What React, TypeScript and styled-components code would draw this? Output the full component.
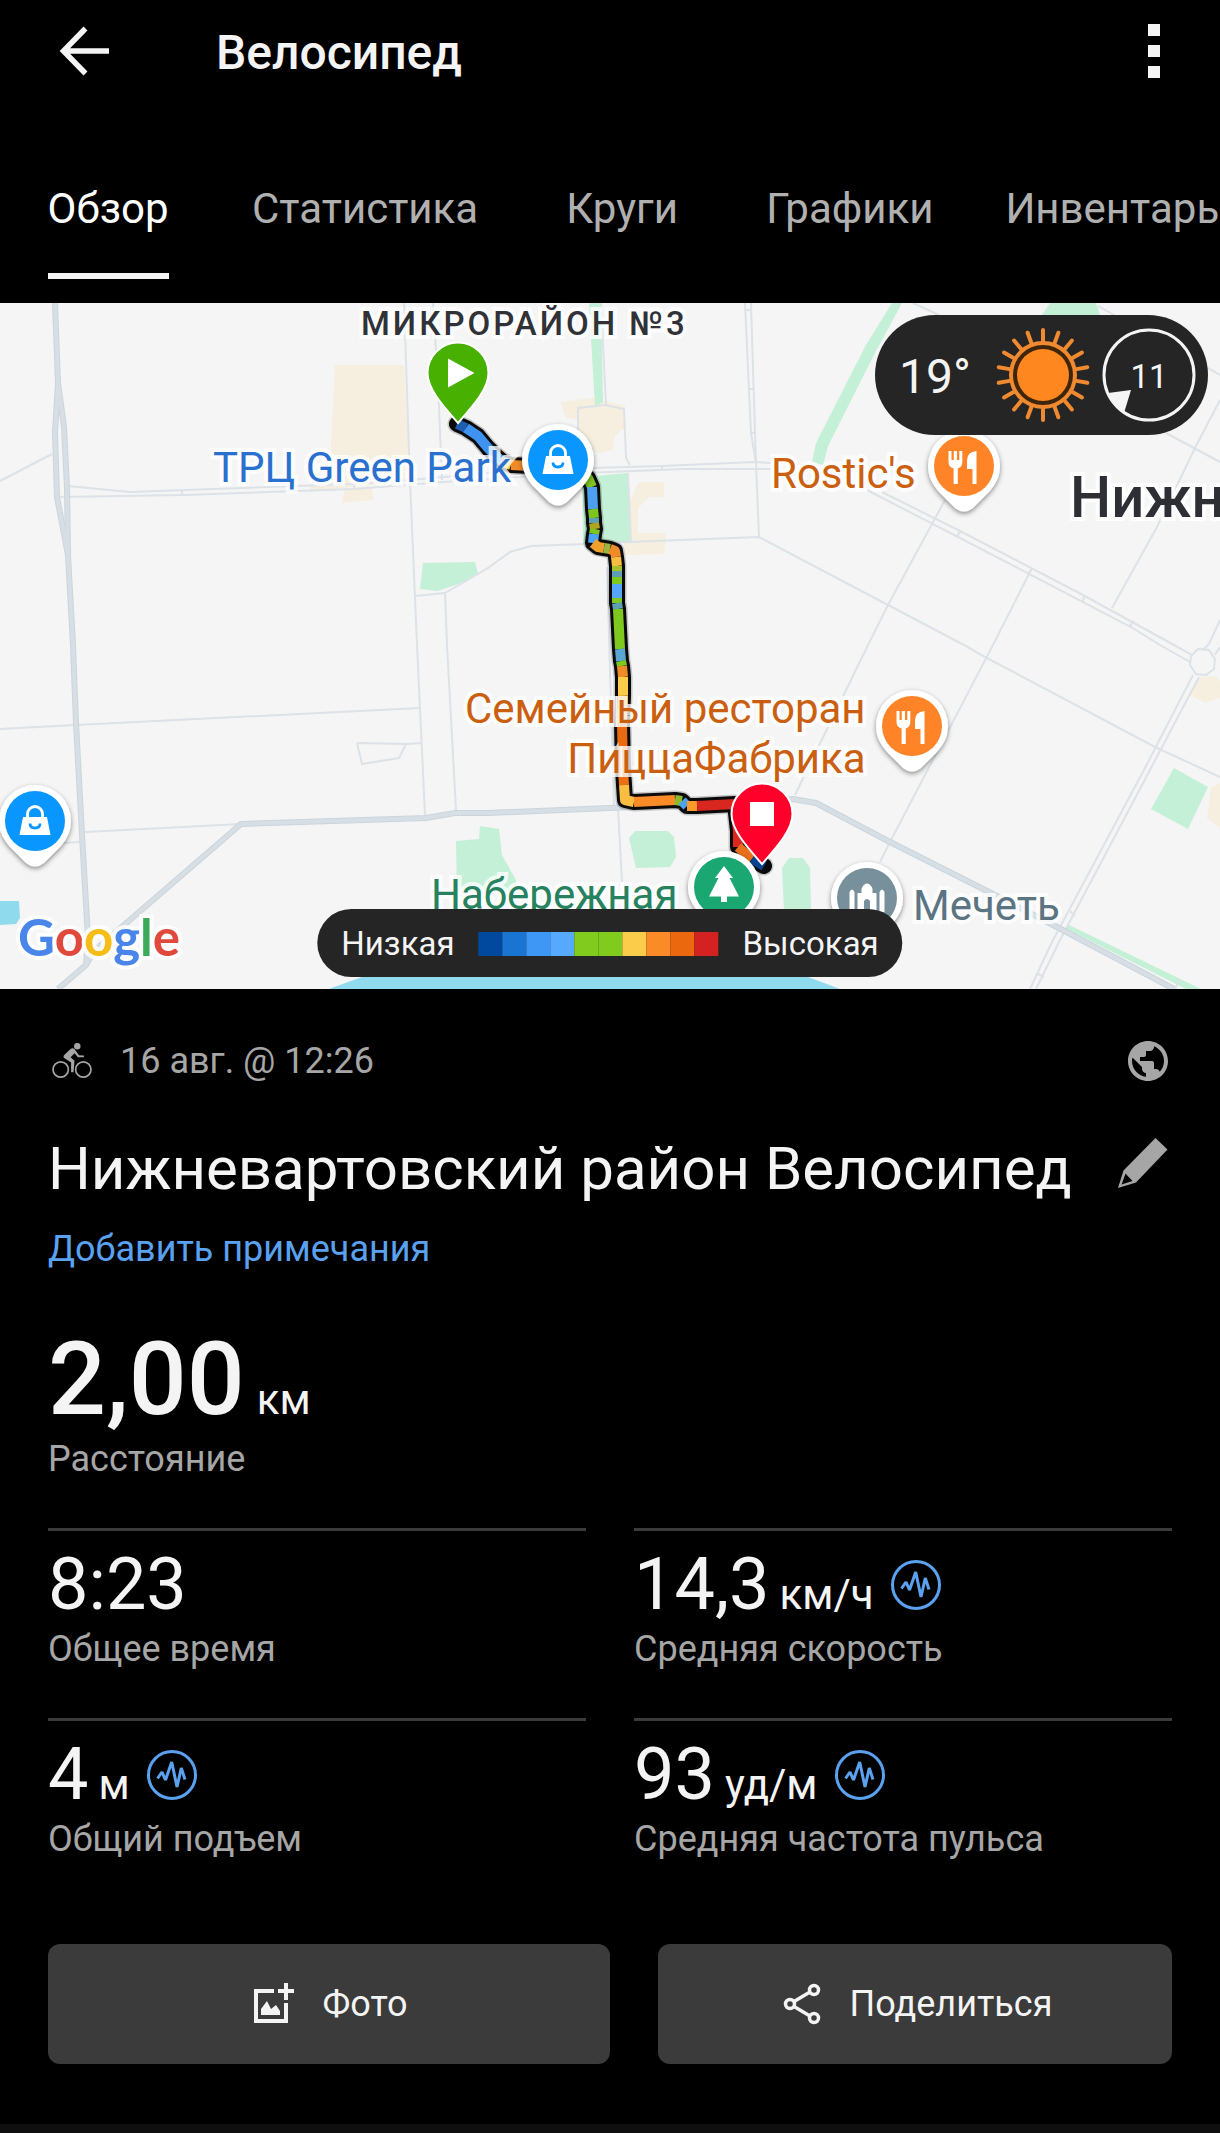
import React from 'react';
import styled, { createGlobalStyle } from 'styled-components';
import { MdPublic } from 'react-icons/md';

const MAP_W = 1220;
const MAP_H = 686;

const color = {
  bg: '#000000',
  text: '#f4f4f4',
  muted: '#a6a6a6',
  link: '#5aa2f0',
  line: '#3b3b3b',
  panel: '#252525',
};

const GlobalStyle = createGlobalStyle`
  *, *::before, *::after { box-sizing: border-box; }
  html, body { margin: 0; background: ${color.bg}; }
  body { font-family: Roboto, "Noto Sans", sans-serif; color: ${color.text}; }
  h1, h2, p, dl, dt, dd { margin: 0; font-weight: 400; }
  button { font: inherit; color: inherit; background: none; border: 0; padding: 0; cursor: pointer; }
  svg { display: block; }
`;

const Page = styled.div`
  overflow-x: hidden;
`;

/* ---------- header ---------- */

const AppBar = styled.header`
  display: flex;
  align-items: center;
  height: 104px;
  padding: 0 42px 0 48px;
`;

const IconButton = styled.button`
  display: flex;
  flex: none;
  align-items: center;
  justify-content: center;
`;

const ScreenTitle = styled.h1`
  flex: 1;
  margin-left: 96px;
  padding-top: 2px;
  font-size: 48px;
  font-weight: 500;
  line-height: 60px;
`;

const TabStrip = styled.nav`
  display: flex;
  overflow: hidden;
`;

const Tab = styled.button<{ $active?: boolean }>`
  display: flex;
  flex: none;
  justify-content: center;
  min-width: 216px;
  padding: 75px 36px 24px;
  font-size: 42px;
  line-height: 60px;
  white-space: nowrap;
  color: ${(p) => (p.$active ? '#ffffff' : '#b0b0b0')};
`;

const TabText = styled.span<{ $active?: boolean }>`
  padding-bottom: 34px;
  border-bottom: 6px solid ${(p) => (p.$active ? color.text : 'transparent')};
`;

/* ---------- map ---------- */

const MapArea = styled.section`
  position: relative;
  overflow: hidden;
  background: #f5f5f5;
`;

const MapDrawing = styled.svg`
  width: 100%;
  height: auto;
`;

const pct = (v: number, total: number) => `${(v / total) * 100}%`;

const MapLabel = styled.span<{ $x: number; $y: number; $color: string }>`
  position: absolute;
  left: ${(p) => pct(p.$x, MAP_W)};
  top: ${(p) => pct(p.$y, MAP_H)};
  font-size: 42px;
  line-height: 50px;
  white-space: pre;
  text-align: right;
  color: ${(p) => p.$color};
  -webkit-text-stroke: 8px rgba(255, 255, 255, 0.8);
  paint-order: stroke fill;
`;

const DistrictLabel = styled(MapLabel)`
  font-size: 33px;
  font-weight: 500;
  letter-spacing: 3px;
`;

const CityLabel = styled(MapLabel)`
  font-size: 58px;
  font-weight: 500;
  line-height: 60px;
`;

const GoogleMark = styled(MapLabel)`
  font-family: Lato, Roboto, sans-serif;
  font-size: 51px;
  font-weight: 700;
  line-height: 60px;
`;

const Tint = styled.span<{ $c: string }>`
  color: ${(p) => p.$c};
`;

const WeatherPill = styled.div`
  position: absolute;
  top: 12px;
  right: 12px;
  display: flex;
  align-items: center;
  height: 120px;
  padding: 0 12px 0 24px;
  border-radius: 60px;
  background: ${color.panel};
`;

const Temperature = styled.span`
  margin-right: 25px;
  padding-top: 4px;
  font-size: 48px;
  line-height: 60px;
`;

const Wind = styled.div`
  display: grid;
  place-items: center;
  margin-left: 12px;
  font-size: 33px;
  line-height: 40px;

  > * {
    grid-area: 1 / 1;
  }
`;

const WindSpeed = styled.span`
  padding-top: 4px;
`;

const Legend = styled.div`
  position: absolute;
  bottom: 12px;
  left: 50%;
  display: flex;
  align-items: center;
  gap: 24px;
  height: 68px;
  padding: 2px 24px 0;
  border-radius: 34px;
  background: ${color.panel};
  font-size: 33px;
  line-height: 40px;
  white-space: nowrap;
  transform: translateX(-50%);
`;

const Scale = styled.div`
  display: flex;
`;

const Swatch = styled.span<{ $c: string }>`
  width: 24px;
  height: 24px;
  background: ${(p) => p.$c};
`;

/* ---------- activity details ---------- */

const Details = styled.main`
  padding: 48px 48px 60px;
`;

const MetaRow = styled.div`
  display: flex;
  align-items: center;
  height: 48px;
  padding-left: 4px;
  font-size: 36px;
  color: ${color.muted};
`;

const MetaDate = styled.time`
  flex: 1;
  margin-left: 28px;
`;

const NameRow = styled.div`
  display: flex;
  align-items: flex-start;
  justify-content: space-between;
  margin-top: 48px;
`;

const ActivityName = styled.h2`
  font-size: 60px;
  line-height: 72px;
`;

const EditButton = styled(IconButton)`
  padding: 5px 0;
  color: ${color.muted};
`;

const NotesLink = styled.a`
  display: block;
  width: fit-content;
  margin-top: 20px;
  font-size: 36px;
  line-height: 48px;
  color: ${color.link};
  text-decoration: none;
`;

const Stat = styled.div`
  display: flex;
  flex-direction: column-reverse;
  justify-content: flex-end;
`;

const HeroStat = styled(Stat)`
  margin: 50px 0 45px;
`;

const StatLabel = styled.dt`
  font-size: 36px;
  line-height: 48px;
  color: ${color.muted};
`;

const StatValue = styled.dd<{ $hero?: boolean }>`
  display: flex;
  align-items: center;
  gap: 16px;
  font-size: ${(p) => (p.$hero ? 102 : 72)}px;
  font-weight: ${(p) => (p.$hero ? 500 : 400)};
  line-height: ${(p) => (p.$hero ? 112 : 80)}px;
`;

const Unit = styled.span<{ $gap: number }>`
  margin-left: ${(p) => p.$gap}px;
  font-size: 42px;
  font-weight: 400;
  line-height: 1;
`;

const StatGrid = styled.dl`
  display: grid;
  grid-template-columns: 1fr 1fr;
  column-gap: 48px;
`;

const StatCell = styled(Stat)`
  padding: 14px 0 45px;
  border-top: 3px solid ${color.line};
`;

const Actions = styled.div`
  display: grid;
  grid-template-columns: 562fr 514fr;
  gap: 48px;
  margin-top: 36px;
`;

const ActionButton = styled.button`
  display: flex;
  align-items: center;
  justify-content: center;
  gap: 24px;
  height: 120px;
  border-radius: 12px;
  background: ${color.line};
  font-size: 36px;
  line-height: 48px;
`;

const NextSection = styled.footer`
  height: 10px;
  background: #0f0f0f;
`;

/* ---------- icons ---------- */

const BackIcon = () => (
  <svg width="72" height="72" viewBox="0 0 72 72" fill="none" stroke={color.text} strokeWidth="5.500">
    <path d="M61 35H16M37.500 12.500 15.500 35l22 22.500" />
  </svg>
);

const MoreIcon = () => (
  <svg width="48" height="60" viewBox="0 0 48 60" fill={color.text}>
    <path d="M18 2h12v12H18zM18 23h12v12H18zM18 44h12v12H18z" />
  </svg>
);

const BikeIcon = () => (
  <svg width="40" height="36" viewBox="0 0 40 36" fill="currentColor">
    <g fill="none" stroke="currentColor" strokeWidth="1.7">
      <circle cx="8.7" cy="26.5" r="7.7" />
      <circle cx="31.3" cy="26.5" r="7.7" />
    </g>
    <circle cx="25.3" cy="3.3" r="3.2" />
    <path d="M18.5 6 12.2 12q-1.6 2 .3 3.2l6.6 4.4v9.6h2.4l1-11.4-3.9-3.6 4-3.9 3.3 3.9h6v-1.6l-5-.4L22.500 6q-2-1.300-4 0z" />
  </svg>
);

const PencilIcon = () => (
  <svg width="54" height="54" viewBox="0 0 54 54" fill="currentColor">
    <path fillRule="evenodd" d="M37.500 0 49.500 11.500 18 44.500 0 50 5.500 32.500zM7.500 35.500 3.600 46.500 14.500 43z" />
  </svg>
);

const PulseIcon = () => (
  <svg width="52" height="52" viewBox="-26 -26 52 52" fill="none" stroke={color.link} strokeWidth="3">
    <circle r="23.5" />
    <path d="M-14.500 3.500-10-3-6.500 5-.300-13 5 12 9.300-7 13 4.500" strokeWidth="3" strokeLinejoin="bevel" />
  </svg>
);

const PhotoIcon = () => (
  <svg width="48" height="48" viewBox="0 0 48 48" fill="none" stroke={color.text} strokeWidth="4">
    <path d="M24 11H6v30h30V23M36 3v17M28 11h16" />
    <path d="M11 35v-6l6-8 4 8 5-4 4 6v4z" fill={color.text} stroke="none" />
  </svg>
);

const ShareIcon = () => (
  <svg width="48" height="48" viewBox="0 0 48 48" fill="none" stroke={color.text} strokeWidth="3.500">
    <path d="M16 21.500 32 12M16 26.500 32 36" />
    <circle cx="12" cy="24" r="4.500" />
    <circle cx="36" cy="10" r="4.500" />
    <circle cx="36" cy="38" r="4.500" />
  </svg>
);

const rayAngles = Array.from({ length: 18 }, (_, i) => i * 20);

const SunIcon = () => (
  <svg width="94" height="94" viewBox="-47 -47 94 94">
    <circle r="32" fill="#3f260a" stroke="#f08a30" strokeWidth="4" />
    <circle r="26" fill="#ff8720" />
    <g stroke="#f08a30" strokeWidth="4" strokeLinecap="round">
      {rayAngles.map((a) => (
        <line key={a} x1="0" y1="-34" x2="0" y2="-45" transform={`rotate(${a})`} />
      ))}
    </g>
  </svg>
);

const WindDial = () => (
  <svg width="94" height="94" viewBox="-47 -47 94 94">
    <circle r="45" fill="none" stroke={color.text} strokeWidth="3" />
    <path d="M-41 18-18 15-25 38A46 46 0 0 1-41 18z" fill={color.text} />
  </svg>
);

/* ---------- map symbols ---------- */

const BagGlyph = () => (
  <>
    <path d="M-12-4h24l3.500 18h-31z" fill="#fff" />
    <path d="M-7.500-3v-4a7.500 7.500 0 0 1 15 0v4" fill="none" stroke="#fff" strokeWidth="2.800" />
    <path d="M-5 2.500q0 4.500 5 4.500t5-4.500" fill="none" stroke="#0a96ff" strokeWidth="2.800" />
  </>
);

const FoodGlyph = () => (
  <g fill="#fff">
    <path d="M-15.500-15h3v9h2.300v-9h3.200v9h2.300v-9h3v11q0 5-4.500 6.500V18h-4.200V2.500q-5.100-1.500-5.100-6.500z" />
    <path d="M12.500-15V18H8.500V3H3v-9q0-8 9.500-9z" />
  </g>
);

const TreeGlyph = () => (
  <path d="M0-21 9-9H5.500L15 9.500H3V15h-6V9.500h-12L-5.500-9H-9z" fill="#fff" />
);

const MosqueGlyph = () => (
  <path
    d="M-17.500 14V-6q2.500-5 5 0V14zM12.500 14V-6q2.500-5 5 0V14zM-9.500 14V-5h4v-4Q-4-14 0-14.500 4-14 5.500-9v4h4v19H3V3Q0-1-3 3v11z"
    fill="#fff"
  />
);

interface PoiProps {
  x: number;
  y: number;
  fill: string;
  children: React.ReactNode;
}

const Poi = ({ x, y, fill, children }: PoiProps) => (
  <g transform={`translate(${x} ${y})`}>
    <path
      d="M0-36A36 36 0 0 1 36 0C36 11 31 19 25 26L9 42Q0 49-9 42L-25 26C-31 19-36 11-36 0A36 36 0 0 1 0-36z"
      fill="#fff"
      filter="url(#pin-shadow)"
    />
    <circle r="30" fill={fill} />
    {children}
  </g>
);

const TrackPin = ({ x, y, fill, children }: PoiProps) => (
  <g transform={`translate(${x} ${y})`}>
    <path
      d="M0-30.500A30.500 30.500 0 0 1 30.500 0C30.500 16 15 33 0 50-15 33-30.500 16-30.500 0A30.500 30.500 0 0 1 0-30.500z"
      fill={fill}
      stroke="#fff"
      strokeWidth="2"
    />
    {children}
  </g>
);

/* ---------- map data ---------- */

const parks = [
  '589,0 601,0 603,99 595,104',
  '582,174 628,170 631,240 583,240',
  '892,0 902,0 875,50 828,143 823,162 812,159 816,140 866,42',
  '1050,0 1096,0 1100,12 1042,12',
  '423,260 475,259 478,270 461,280 438,288 420,286',
  '480,523 499,526 502,552 516,577 516,589 457,589 456,538 479,536',
  '635,528 668,528 674,534 676,554 670,564 636,565 629,535',
  '789,555 803,555 810,565 811,608 784,608 782,565',
  '1174,465 1208,484 1188,526 1151,506',
  '1069,622 1201,686 1186,686 1065,625',
];

const blocks = [
  '335,62 404,62 410,177 310,189 310,183 329,180',
  '345,186 372,185 373,197 342,200',
  '560,99 593,95 625,103 625,125 615,132 613,147 598,150 590,144 579,144 578,116 566,115',
  '639,179 664,179 664,194 649,194 638,205 638,230 666,230 664,251 624,252 624,240 630,240 630,197',
  '1199,374 1215,373 1220,378 1220,395 1205,400 1190,392',
  '1211,485 1220,480 1220,525 1207,515',
];

const waters = ['0,598 19,598 20,615 16,621 0,622', '329,686 362,674 808,674 840,686'];

const streets = [
  '0,178 52,151',
  '68,183 130,189 352,181 410,177 520,167 662,163 754,159 771,160',
  '58,194 183,192 354,186 443,179 583,170 684,166 771,166',
  '182,187 182,192',
  '354,181 354,186',
  '404,0 410,177 417,342 425,512',
  '433,0 438,80 442,177',
  '415,293 445,290 488,265 510,249 531,243 585,241 629,239 759,234 888,302 964,342 985,354 1155,444 1220,474',
  '445,290 447,342 456,507',
  '607,264 614,505',
  '601,0 606,102',
  '578,171 578,105 605,102 624,106 626,155 630,162',
  '628,170 631,240',
  '745,0 751,130 756,160 759,234',
  '751,0 755,130 756,160',
  '746,7 751,7',
  '750,86 754,86',
  '751,130 755,130',
  '662,163 662,167',
  '867,187 958,234 1131,324 1160,342 1190,359',
  '882,189 960,228 1083,292 1174,342 1192,352',
  '961,228 956,234',
  '1032,265 1028,271',
  '1084,292 1083,300',
  '1134,318 1129,324',
  '945,197 888,302 868,342 795,492',
  '1032,265 993,342 890,539 880,559',
  '1220,97 1195,145 1157,224 1112,305',
  '1166,130 1220,159',
  '913,0 939,12',
  '1098,3 1220,72',
  '1220,317 1209,341 1203,347',
  '1215,352 1220,344',
  '1193,372 1145,465 1052,639 1030,686',
  '1199,374 1151,465 1059,639 1036,686',
  '1070,608 1075,613',
  '1038,671 1044,674',
  '1175,686 1180,676',
  '0,426 76,422 420,405',
  '357,440 406,441 399,455 362,461 357,440',
  '406,441 422,440',
  '85,529 241,521',
  '64,540 80,539',
  '618,505 622,579',
];

const highways = [
  '55,0 58,80 55,130 57,194 68,252 73,342 76,420 82,532 88,635 86,662 58,686',
  '58,80 64,124 67,185 68,252',
  '86,662 94,648 241,521 426,515 455,510 488,510 610,505 760,499 793,496 816,500 890,539 999,594 1057,624 1174,686',
];

const track: { c: string; p: string }[] = [
  { c: '#1d5fae', p: '457,121 466,125' },
  { c: '#3f92f0', p: '466,125 478,133 488,145 496,153' },
  { c: '#57a9f5', p: '496,153 503,159' },
  { c: '#f6c64a', p: '503,159 511,162' },
  { c: '#f08c28', p: '511,162 530,163' },
  { c: '#f08c28', p: '530,163 575,166' },
  { c: '#7fc520', p: '575,166 588,175 592,184' },
  { c: '#4d9ff2', p: '592,184 593,206' },
  { c: '#7fc520', p: '593,206 594,215' },
  { c: '#5b9fb8', p: '594,215 594,220' },
  { c: '#b0a522', p: '594,220 595,226' },
  { c: '#7fc520', p: '595,226 594,231' },
  { c: '#4da3f5', p: '594,231 593,240' },
  { c: '#f0a02c', p: '593,240 598,244 604,245' },
  { c: '#9cb440', p: '604,245 610,246' },
  { c: '#f08c28', p: '610,246 615,248 616,254' },
  { c: '#f9bd42', p: '616,254 617,263' },
  { c: '#a6c22a', p: '617,263 617,268' },
  { c: '#5d9fb4', p: '617,268 617,274' },
  { c: '#7fc91e', p: '617,274 617,281' },
  { c: '#55a6fa', p: '617,281 617,295' },
  { c: '#7fc91e', p: '617,295 617,300' },
  { c: '#5d9fb4', p: '617,300 618,306' },
  { c: '#7fc91e', p: '618,306 620,346' },
  { c: '#5aa5d2', p: '620,346 621,358' },
  { c: '#7fc91e', p: '621,358 622,363' },
  { c: '#f08c28', p: '622,363 623,374' },
  { c: '#fbcb4a', p: '623,374 623,392' },
  { c: '#f5b03c', p: '623,392 622,420' },
  { c: '#ea6a12', p: '622,420 623,466' },
  { c: '#ec6f14', p: '623,466 624,482' },
  { c: '#f9bd42', p: '624,482 625,497 634,499' },
  { c: '#fa8b26', p: '634,499 675,497' },
  { c: '#8cba2c', p: '675,497 682,498' },
  { c: '#4da3e8', p: '682,498 687,503' },
  { c: '#fa9a2c', p: '687,503 697,503' },
  { c: '#d8271f', p: '697,503 735,501 738,528 738,544' },
  { c: '#e8701c', p: '738,544 752,556' },
  { c: '#08438f', p: '752,556 764,563' },
];

const trackOutline = track.map((s) => s.p).join(' ');

const scaleColors = [
  '#00499f', '#1a75d2', '#3e96f5', '#55aaff', '#80cb1d',
  '#80cb1d', '#fbcb4a', '#fb8b26', '#ec680e', '#d32221',
];

const RouteMap = () => (
  <MapArea aria-label="Карта маршрута">
    <MapDrawing viewBox={`0 0 ${MAP_W} ${MAP_H}`} aria-hidden="true">
      <defs>
        <filter id="pin-shadow" x="-30%" y="-30%" width="160%" height="160%">
          <feDropShadow dx="0" dy="2" stdDeviation="2.500" floodOpacity="0.450" />
        </filter>
      </defs>
      <rect width={MAP_W} height={MAP_H} fill="#f5f5f5" />
      {blocks.map((p) => <polygon key={p} points={p} fill="#f6efdf" />)}
      {parks.map((p) => <polygon key={p} points={p} fill="#c3f0d6" />)}
      {waters.map((p) => <polygon key={p} points={p} fill="#90daed" />)}
      <g fill="none" stroke="#dce2e7" strokeWidth="2">
        {streets.map((p) => <polyline key={p} points={p} />)}
        <polygon points="1198,346 1209,347 1215,356 1214,366 1206,372 1196,371 1190,362 1191,353" />
      </g>
      <g fill="none" stroke="#cbd5dd" strokeWidth="6" strokeLinejoin="round">
        {highways.map((p) => <polyline key={p} points={p} />)}
      </g>
      <g fill="none" stroke="#d7dfe5" strokeWidth="4" strokeLinejoin="round">
        {highways.map((p) => <polyline key={p} points={p} />)}
      </g>
      <g fill="none" strokeLinejoin="round">
        <polyline points={trackOutline} stroke="#00000030" strokeWidth="19" strokeLinecap="round" />
        <polyline points={trackOutline} stroke="#0a0a0a" strokeWidth="16" strokeLinecap="round" />
        {track.map((s) => (
          <polyline key={s.p} points={s.p} stroke={s.c} strokeWidth="10" />
        ))}
      </g>
      <Poi x={558} y={157} fill="#0a96ff"><BagGlyph /></Poi>
      <Poi x={35} y={518} fill="#0a96ff"><BagGlyph /></Poi>
      <Poi x={964} y={163} fill="#ff8427"><FoodGlyph /></Poi>
      <Poi x={912} y={423} fill="#ff8427"><FoodGlyph /></Poi>
      <Poi x={724} y={584} fill="#1aa772"><TreeGlyph /></Poi>
      <Poi x={867} y={595} fill="#78909c"><MosqueGlyph /></Poi>
      <TrackPin x={458} y={70} fill="#47b000">
        <path d="M-10-14.500 16.500 0-10 14.500z" fill="#fff" />
      </TrackPin>
      <TrackPin x={762} y={511} fill="#ff002b">
        <path d="M-12-12h24v24h-24z" fill="#fff" />
      </TrackPin>
    </MapDrawing>

    <DistrictLabel $x={361} $y={-4} $color="#303238">МИКРОРАЙОН №3</DistrictLabel>
    <MapLabel $x={213} $y={140} $color="#2a70cf">ТРЦ Green Park</MapLabel>
    <MapLabel $x={771} $y={146} $color="#cb5f10">Rostic's</MapLabel>
    <CityLabel $x={1070} $y={164} $color="#2d2f34">Нижн</CityLabel>
    <MapLabel $x={465} $y={381} $color="#cb5f10">{'Семейный ресторан\nПиццаФабрика'}</MapLabel>
    <MapLabel $x={431} $y={567} $color="#27825f">Набережная</MapLabel>
    <MapLabel $x={913} $y={578} $color="#5b7482">Мечеть</MapLabel>
    <GoogleMark $x={18} $y={604} $color="#4a86ea">
      G<Tint $c="#df4a3c">o</Tint><Tint $c="#f6bd18">o</Tint>g<Tint $c="#3caa58">l</Tint><Tint $c="#df4a3c">e</Tint>
    </GoogleMark>

    <WeatherPill>
      <Temperature>19°</Temperature>
      <SunIcon />
      <Wind><WindDial /><WindSpeed>11</WindSpeed></Wind>
    </WeatherPill>

    <Legend>
      <span>Низкая</span>
      <Scale>{scaleColors.map((c, i) => <Swatch key={i} $c={c} />)}</Scale>
      <span>Высокая</span>
    </Legend>
  </MapArea>
);

/* ---------- screen ---------- */

const tabs = ['Обзор', 'Статистика', 'Круги', 'Графики', 'Инвентарь'];

interface StatData {
  value: string;
  unit?: string;
  label: string;
  chart?: boolean;
}

const stats: StatData[] = [
  { value: '8:23', label: 'Общее время' },
  { value: '14,3', unit: 'км/ч', label: 'Средняя скорость', chart: true },
  { value: '4', unit: 'м', label: 'Общий подъем', chart: true },
  { value: '93', unit: 'уд/м', label: 'Средняя частота пульса', chart: true },
];

export default function App() {
  return (
    <Page>
      <GlobalStyle />
      <AppBar>
        <IconButton aria-label="Назад"><BackIcon /></IconButton>
        <ScreenTitle>Велосипед</ScreenTitle>
        <IconButton aria-label="Ещё"><MoreIcon /></IconButton>
      </AppBar>
      <TabStrip>
        {tabs.map((name, i) => (
          <Tab key={name} $active={i === 0}>
            <TabText $active={i === 0}>{name}</TabText>
          </Tab>
        ))}
      </TabStrip>

      <RouteMap />

      <Details>
        <MetaRow>
          <BikeIcon />
          <MetaDate>16 авг. @ 12:26</MetaDate>
          <MdPublic size={48} />
        </MetaRow>
        <NameRow>
          <ActivityName>Нижневартовский район Велосипед</ActivityName>
          <EditButton aria-label="Изменить"><PencilIcon /></EditButton>
        </NameRow>
        <NotesLink href="#notes">Добавить примечания</NotesLink>

        <dl>
          <HeroStat>
            <StatLabel>Расстояние</StatLabel>
            <StatValue $hero><span>2,00<Unit $gap={12}>км</Unit></span></StatValue>
          </HeroStat>
        </dl>

        <StatGrid>
          {stats.map((s) => (
            <StatCell key={s.label}>
              <StatLabel>{s.label}</StatLabel>
              <StatValue>
                <span>{s.value}{s.unit && <Unit $gap={10}>{s.unit}</Unit>}</span>
                {s.chart && <PulseIcon />}
              </StatValue>
            </StatCell>
          ))}
        </StatGrid>

        <Actions>
          <ActionButton><PhotoIcon />Фото</ActionButton>
          <ActionButton><ShareIcon />Поделиться</ActionButton>
        </Actions>
      </Details>
      <NextSection />
    </Page>
  );
}
